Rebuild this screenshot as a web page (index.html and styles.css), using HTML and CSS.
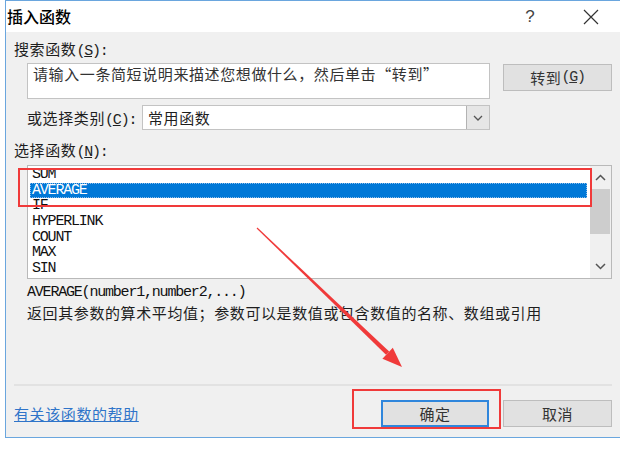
FILE: index.html
```html
<!DOCTYPE html>
<html lang="zh-CN">
<head>
<meta charset="utf-8">
<title>插入函数</title>
<link rel="stylesheet" href="styles.css">
</head>
<body>
<div class="page">
  <div class="dialog">
    <div class="titlebar">
      <span class="title">插入函数</span>
      <span class="tb-btn help">?</span>
      <span class="tb-btn close">
        <svg width="16" height="16" viewBox="0 0 16 16"><path d="M1 1 L15 15 M15 1 L1 15" stroke="#333" stroke-width="1.2" fill="none"/></svg>
      </span>
    </div>
    <div class="content">
      <div class="label">搜索函数<span class="acc">(<u>S</u>):</span></div>
      <div class="search-row">
        <div class="searchbox">请输入一条简短说明来描述您想做什么，然后单击“转到”</div>
        <div class="btn go">转到<span class="acc">(<u>G</u>)</span></div>
      </div>
      <div class="cat-row">
        <div class="cat-label">或选择类别<span class="acc">(<u>C</u>):</span></div>
        <div class="combo">
          <span class="combo-text">常用函数</span>
          <span class="combo-btn">
            <svg width="10" height="6" viewBox="0 0 10 6"><path d="M1 1 L5 5 L9 1" stroke="#555" stroke-width="1.3" fill="none"/></svg>
          </span>
        </div>
      </div>
      <div class="label label-fn">选择函数<span class="acc">(<u>N</u>):</span></div>
      <div class="listbox">
        <ul class="items">
          <li>SUM</li>
          <li class="sel">AVERAGE</li>
          <li>IF</li>
          <li>HYPERLINK</li>
          <li>COUNT</li>
          <li>MAX</li>
          <li>SIN</li>
        </ul>
        <div class="scrollbar">
          <div class="sb-arrow">
            <svg width="11" height="7" viewBox="0 0 11 7"><path d="M1 6 L5.5 1.5 L10 6" stroke="#555" stroke-width="1.5" fill="none"/></svg>
          </div>
          <div class="sb-thumb"></div>
          <div class="sb-track"></div>
          <div class="sb-arrow">
            <svg width="11" height="7" viewBox="0 0 11 7"><path d="M1 1 L5.5 5.5 L10 1" stroke="#555" stroke-width="1.5" fill="none"/></svg>
          </div>
        </div>
      </div>
      <div class="syntax">AVERAGE(number1,number2,...)</div>
      <div class="desc">返回其参数的算术平均值；参数可以是数值或包含数值的名称、数组或引用</div>
      <div class="sep"></div>
      <div class="footer">
        <a class="helplink">有关该函数的帮助</a>
        <div class="btn ok">确定</div>
        <div class="btn cancel">取消</div>
      </div>
    </div>
  </div>
  <div class="mark mark-list"></div>
  <div class="mark mark-ok"></div>
  <svg class="arrow" width="620" height="459" viewBox="0 0 620 459">
    <polygon points="257.4,227.6 256.6,228.4 386.0,354.8 389.2,351.6" fill="#f03a3a"/>
    <polygon points="402,367 382.4,358.7 392.8,347.8" fill="#f03a3a"/>
  </svg>
</div>
</body>
</html>
```

FILE: styles.css
```css
* { box-sizing: border-box; }
html, body { margin: 0; padding: 0; background: #fff; }
body {
  width: 620px;
  height: 459px;
  overflow: hidden;
  font-family: "Noto Sans CJK SC", sans-serif;
  color: #1e1e1e;
}
.page { position: relative; width: 620px; height: 459px; padding-left: 5px; }

.dialog {
  width: 615px;
  height: 438px;
  border: 1px solid #6aa6de;
  border-right: none;
  background: #f0f0f0;
  display: flex;
  flex-direction: column;
}

.titlebar {
  flex: none;
  height: 31px;
  background: #fff;
  display: flex;
  align-items: center;
  padding: 0 6px 0 1px;
}
.title { font-size: 16px; font-weight: 500; color: #000; line-height: 31px; }
.tb-btn { width: 46px; height: 31px; display: flex; align-items: center; justify-content: center; }
.help {
  margin-left: auto;
  margin-right: 15px;
  font-family: "Liberation Sans", sans-serif;
  font-size: 17px;
  color: #444;
}

.content {
  flex: 1;
  padding: 0 8px;
  display: flex;
  flex-direction: column;
  font-size: 15px;
  letter-spacing: 0.6px;
}
.acc {
  font-family: "Liberation Mono", monospace;
  font-size: 15px;
  letter-spacing: -1.2px;
}
.label { margin-top: 8px; height: 18px; line-height: 18px; }
.label-fn { margin-top: 11px; }

.search-row { margin-top: 5px; display: flex; align-items: flex-start; }
.searchbox {
  margin-left: 13px;
  width: 463px;
  height: 36px;
  background: #fff;
  border: 1px solid #c3c3c3;
  padding: 0 5px;
  line-height: 19px;
  color: #333;
  white-space: nowrap;
  overflow: hidden;
}
.btn {
  height: 27px;
  background: #e1e1e1;
  border: 1px solid #bdbdbd;
  display: flex;
  align-items: center;
  justify-content: center;
  color: #333;
}
.go { margin-left: 13px; margin-top: 1px; width: 109px; }

.cat-row { margin-top: 6px; height: 25px; display: flex; align-items: center; }
.cat-label { margin-left: 13px; width: 115px; }
.combo {
  width: 348px;
  height: 25px;
  background: #fff;
  border: 1px solid #c3c3c3;
  display: flex;
  align-items: stretch;
}
.combo-text { flex: 1; padding-left: 5px; line-height: 23px; }
.combo-btn {
  width: 23px;
  background: #e6e6e6;
  border-left: 1px solid #b3b3b3;
  display: flex;
  align-items: center;
  justify-content: center;
}

.listbox {
  margin: 6px 0 0 13px;
  width: 585px;
  height: 114px;
  background: #fff;
  border: 1px solid #b9b9b9;
  display: flex;
  overflow: hidden;
}
.items {
  flex: 1;
  list-style: none;
  margin: 0;
  padding: 1px 0 0;
  font-family: "Liberation Mono", monospace;
  font-size: 15px;
  letter-spacing: -1.2px;
  color: #111;
}
.items li {
  height: 15.7px;
  line-height: 15.7px;
  margin: 0 3px 0 2px;
  padding-left: 2px;
}
.items li.sel {
  background: #0078d7;
  color: #fff;
  outline: 1px dotted #8fbde8;
  outline-offset: -1px;
}
.scrollbar {
  width: 21px;
  background: #f0f0f0;
  display: flex;
  flex-direction: column;
}
.sb-arrow { height: 23px; display: flex; align-items: center; justify-content: center; }
.sb-thumb { height: 45px; background: #cdcdcd; margin-right: 1px; }
.sb-track { flex: 1; }

.syntax {
  margin: 5px 0 0 13px;
  height: 17px;
  line-height: 17px;
  font-family: "Liberation Mono", monospace;
  font-size: 15px;
  letter-spacing: -1.2px;
  color: #111;
}
.desc { margin: 3px 0 0 13px; height: 17px; line-height: 17px; white-space: nowrap; }

.sep { margin-top: 63px; height: 2px; background: #e2e2e2; }

.footer { margin-top: 14px; height: 27px; display: flex; align-items: center; }
.helplink { color: #2f74c9; text-decoration: underline; margin-right: auto; }
.ok { width: 108px; border: 2px solid #2f86dc; }
.cancel { width: 109px; margin-left: 14px; }

.mark {
  position: absolute;
  border: 2px solid #f03a3a;
}
.mark-list { left: 18px; top: 168px; width: 574px; height: 39px; }
.mark-ok { left: 352px; top: 389px; width: 149px; height: 40px; }
.arrow { position: absolute; left: 0; top: 0; pointer-events: none; }
```
